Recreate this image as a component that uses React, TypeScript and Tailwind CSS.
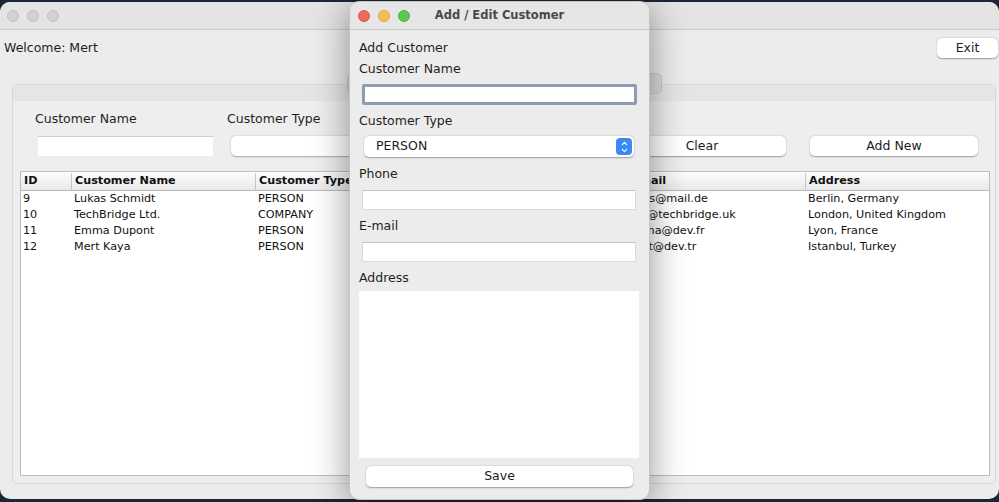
import { ChevronDown, ChevronUp } from "lucide-react"

const FONT = { fontFamily: '"DejaVu Sans", "Liberation Sans", sans-serif' }

const COLS = [
  { title: "ID", w: "w-[51px]" },
  { title: "Customer Name", w: "w-[184px]" },
  { title: "Customer Type", w: "w-[184px]" },
  { title: "Phone", w: "w-[184px]" },
  { title: "E-mail", w: "w-[182px]" },
  { title: "Address", w: "flex-1" }
]

const ROWS = [
  ["9", "Lukas Schmidt", "PERSON", "+49 151 2345678", "lukas@mail.de", "Berlin, Germany"],
  ["10", "TechBridge Ltd.", "COMPANY", "+44 20 7946 0958", "info@techbridge.uk", "London, United Kingdom"],
  ["11", "Emma Dupont", "PERSON", "+33 6 12 34 56 78", "emma@dev.fr", "Lyon, France"],
  ["12", "Mert Kaya", "PERSON", "+90 532 123 4567", "mert@dev.tr", "Istanbul, Turkey"]
]

function Lights({ active }: { active: boolean }) {
  const c = active
    ? ["bg-[#ee6a5f] border-[#d8574c]", "bg-[#f5bd4f] border-[#dca13a]", "bg-[#61c555] border-[#4fae43]"]
    : ["bg-[#d1d1d1] border-[#c0c0c0]", "bg-[#d1d1d1] border-[#c0c0c0]", "bg-[#d1d1d1] border-[#c0c0c0]"]
  return (
    <div className="flex items-center gap-[8px]">
      {c.map((cls, i) => (
        <span key={i} className={`block w-[12px] h-[12px] rounded-full border ${cls}`} />
      ))}
    </div>
  )
}

function MacButton({ label, cls }: { label: string; cls: string }) {
  return (
    <div
      className={`h-[20px] flex items-center justify-center bg-white rounded-[5px] text-[12.5px] text-[#1c1c1c] shadow-[0_0.5px_1.5px_rgba(0,0,0,0.35)] ${cls}`}>
      {label}
    </div>
  )
}

function Label({ text, cls = "" }: { text: string; cls?: string }) {
  return <div className={`h-[20px] flex items-center text-[12.5px] text-[#1e1e1e] ${cls}`}>{text}</div>
}

function MainWindow() {
  return (
    <div className="mt-[2px] h-[497px] w-[999px] rounded-[10px] bg-[#ececec] overflow-hidden flex flex-col">
      {/* title bar */}
      <div className="h-[28px] shrink-0 bg-[#e4e4e4] border-b border-[#cacaca] flex items-center pl-[7px]">
        <Lights active={false} />
      </div>

      <div className="mt-[8px] h-[20px] flex items-center justify-between pl-[4px] pr-[1px]">
        <span className="text-[12.5px] text-[#1c1c1c]">Welcome: Mert</span>
        <MacButton label="Exit" cls="w-[61px]" />
      </div>

      {/* tabbed pane */}
      <div className="mt-[15px] ml-[12px] w-[984px] flex flex-col">
        <div className="relative z-10 h-[21px] flex justify-center">
          <div className="w-[315px] h-[21px] rounded-[5px] bg-[#dcdcdc] border border-[#cdcdcd] flex items-center justify-center text-[12.5px] text-[#1c1c1c]">
            Customer Management
          </div>
        </div>
        <div className="-mt-[10px] h-[400px] rounded-[5px] border border-[#d7d7d7] bg-[#eeeeee] flex flex-col overflow-hidden">
          <div className="h-[16px] shrink-0 bg-[#e5e5e5]" />

          {/* filters */}
          <div className="mt-[8px] flex items-end">
            <div className="ml-[22px] w-[192px] flex flex-col">
              <Label text="Customer Name" />
              <div className="mt-[7px] ml-[3px] w-[175px] h-[20px] bg-white border-t border-[#cfcfcf]" />
            </div>
            <div className="w-[192px] flex flex-col">
              <Label text="Customer Type" />
              <div className="mt-[7px] ml-[4px] w-[175px] h-[20px] bg-white rounded-[5px] shadow-[0_0.5px_1.5px_rgba(0,0,0,0.3)]" />
            </div>
            <MacButton label="Search" cls="ml-[7px] w-[168px]" />
            <MacButton label="Clear" cls="ml-[24px] w-[168px]" />
            <MacButton label="Add New" cls="ml-[24px] w-[168px]" />
          </div>

          {/* table */}
          <div className="mt-[15px] ml-[7px] w-[970px] h-[305px] bg-white border border-[#bdbdbd] flex flex-col text-[11.2px] text-[#111]">
            <div className="mt-[1px] h-[18px] shrink-0 flex bg-gradient-to-b from-[#fbfbfb] to-[#e9e9e9] border-b border-[#b9b9b9]">
              {COLS.map((c, i) => (
                <div
                  key={c.title}
                  className={`${c.w} h-full flex items-center pl-[3px] font-bold ${i < COLS.length - 1 ? "border-r border-[#c6c6c6]" : ""}`}>
                  {c.title}
                </div>
              ))}
            </div>
            {ROWS.map((r) => (
              <div key={r[0]} className="h-[16px] flex">
                {r.map((v, i) => (
                  <div key={i} className={`${COLS[i].w} h-full flex items-center pl-[2px] whitespace-nowrap overflow-hidden`}>
                    {v}
                  </div>
                ))}
              </div>
            ))}
          </div>
        </div>
      </div>
    </div>
  )
}

function Dialog() {
  const field = "ml-[3px] w-[274px] h-[20px] bg-white border border-[#dadada] border-t-[#c2c2c2]"
  return (
    <div className="absolute z-20 left-[349px] top-[1px] w-[301px] h-[499px] rounded-[10px] bg-[#ececec] border border-[#c4c4c4] shadow-[0_6px_36px_rgba(0,0,0,0.42)] overflow-hidden flex flex-col">
      <div className="relative h-[28px] shrink-0 bg-[#e6e6e6] border-b border-[#cacaca] flex items-center pl-[8px]">
        <Lights active />
        <div className="absolute inset-0 flex items-center justify-center text-[11.5px] font-bold text-[#4a4a4a]">
          Add / Edit Customer
        </div>
      </div>

      <div className="pl-[9px] flex flex-col">
        <Label text="Add Customer" cls="mt-[8px]" />
        <Label text="Customer Name" cls="mt-[1px]" />
        <div className="mt-[5px] ml-[3px] w-[275px] h-[21px] bg-white border-[3px] border-[#8e9bb0] rounded-[2px]" />
        <Label text="Customer Type" cls="mt-[6px]" />
        <div className="mt-[5px] ml-[5px] w-[270px] h-[21px] bg-white rounded-[5px] shadow-[0_0.5px_1.5px_rgba(0,0,0,0.35)] flex items-center justify-between pl-[12px] pr-[2px]">
          <span className="text-[12.5px] text-[#1c1c1c]">PERSON</span>
          <span className="w-[16px] h-[17px] rounded-[4px] bg-[#3f87f5] flex flex-col items-center justify-center text-white">
            <ChevronUp size={9} strokeWidth={3} className="-mb-[1px]" />
            <ChevronDown size={9} strokeWidth={3} className="-mt-[1px]" />
          </span>
        </div>
        <Label text="Phone" cls="mt-[7px]" />
        <div className={`mt-[6px] ${field}`} />
        <Label text="E-mail" cls="mt-[6px]" />
        <div className={`mt-[6px] ${field}`} />
        <Label text="Address" cls="mt-[6px]" />
        <div className="mt-[3px] w-[280px] h-[167px] bg-white" />
        <MacButton label="Save" cls="mt-[8px] ml-[7px] w-[267px] h-[21px]" />
      </div>
    </div>
  )
}

export default function App() {
  return (
    <div className="relative w-[999px] h-[502px] bg-[#1b2636] overflow-hidden" style={FONT}>
      <MainWindow />
      <Dialog />
    </div>
  )
}
